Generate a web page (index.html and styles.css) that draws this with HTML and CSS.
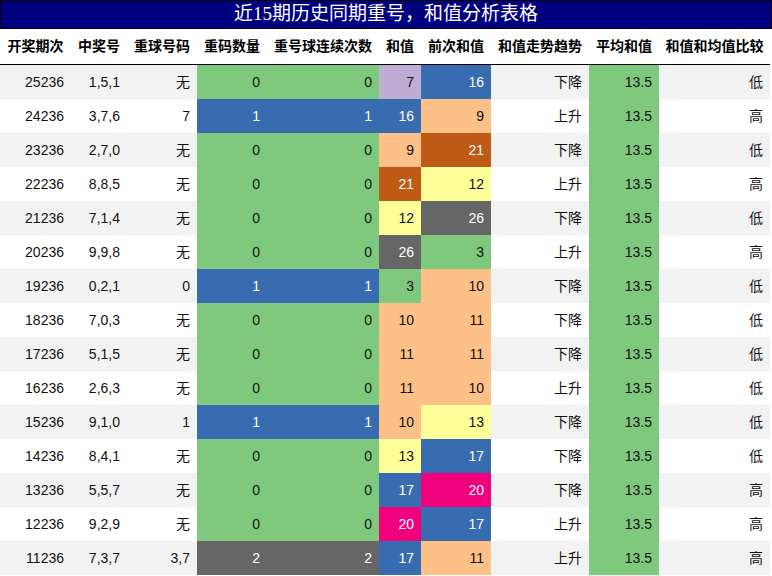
FILE: index.html
```html
<!DOCTYPE html>
<html lang="zh">
<head>
<meta charset="utf-8">
<title>近15期历史同期重号，和值分析表格</title>
<link rel="stylesheet" href="styles.css">
</head>
<body>
<div class="title">近15期历史同期重号，和值分析表格</div>
<div class="table">
  <div class="row head">
    <div>开奖期次</div><div>中奖号</div><div>重球号码</div><div>重码数量</div><div>重号球连续次数</div><div>和值</div><div>前次和值</div><div>和值走势趋势</div><div>平均和值</div><div>和值和均值比较</div>
  </div>
  <div class="row alt"><div>25236</div><div>1,5,1</div><div>无</div><div class="c-green">0</div><div class="c-green">0</div><div class="c-lav">7</div><div class="c-blue">16</div><div>下降</div><div class="c-green">13.5</div><div>低</div></div>
  <div class="row"><div>24236</div><div>3,7,6</div><div>7</div><div class="c-blue">1</div><div class="c-blue">1</div><div class="c-blue">16</div><div class="c-orange">9</div><div>上升</div><div class="c-green">13.5</div><div>高</div></div>
  <div class="row alt"><div>23236</div><div>2,7,0</div><div>无</div><div class="c-green">0</div><div class="c-green">0</div><div class="c-orange">9</div><div class="c-brown">21</div><div>下降</div><div class="c-green">13.5</div><div>低</div></div>
  <div class="row"><div>22236</div><div>8,8,5</div><div>无</div><div class="c-green">0</div><div class="c-green">0</div><div class="c-brown">21</div><div class="c-yellow">12</div><div>上升</div><div class="c-green">13.5</div><div>高</div></div>
  <div class="row alt"><div>21236</div><div>7,1,4</div><div>无</div><div class="c-green">0</div><div class="c-green">0</div><div class="c-yellow">12</div><div class="c-grey">26</div><div>下降</div><div class="c-green">13.5</div><div>低</div></div>
  <div class="row"><div>20236</div><div>9,9,8</div><div>无</div><div class="c-green">0</div><div class="c-green">0</div><div class="c-grey">26</div><div class="c-green">3</div><div>上升</div><div class="c-green">13.5</div><div>高</div></div>
  <div class="row alt"><div>19236</div><div>0,2,1</div><div>0</div><div class="c-blue">1</div><div class="c-blue">1</div><div class="c-green">3</div><div class="c-orange">10</div><div>下降</div><div class="c-green">13.5</div><div>低</div></div>
  <div class="row"><div>18236</div><div>7,0,3</div><div>无</div><div class="c-green">0</div><div class="c-green">0</div><div class="c-orange">10</div><div class="c-orange">11</div><div>下降</div><div class="c-green">13.5</div><div>低</div></div>
  <div class="row alt"><div>17236</div><div>5,1,5</div><div>无</div><div class="c-green">0</div><div class="c-green">0</div><div class="c-orange">11</div><div class="c-orange">11</div><div>下降</div><div class="c-green">13.5</div><div>低</div></div>
  <div class="row"><div>16236</div><div>2,6,3</div><div>无</div><div class="c-green">0</div><div class="c-green">0</div><div class="c-orange">11</div><div class="c-orange">10</div><div>上升</div><div class="c-green">13.5</div><div>低</div></div>
  <div class="row alt"><div>15236</div><div>9,1,0</div><div>1</div><div class="c-blue">1</div><div class="c-blue">1</div><div class="c-orange">10</div><div class="c-yellow">13</div><div>下降</div><div class="c-green">13.5</div><div>低</div></div>
  <div class="row"><div>14236</div><div>8,4,1</div><div>无</div><div class="c-green">0</div><div class="c-green">0</div><div class="c-yellow">13</div><div class="c-blue">17</div><div>下降</div><div class="c-green">13.5</div><div>低</div></div>
  <div class="row alt"><div>13236</div><div>5,5,7</div><div>无</div><div class="c-green">0</div><div class="c-green">0</div><div class="c-blue">17</div><div class="c-pink">20</div><div>下降</div><div class="c-green">13.5</div><div>高</div></div>
  <div class="row"><div>12236</div><div>9,2,9</div><div>无</div><div class="c-green">0</div><div class="c-green">0</div><div class="c-pink">20</div><div class="c-blue">17</div><div>上升</div><div class="c-green">13.5</div><div>高</div></div>
  <div class="row alt"><div>11236</div><div>7,3,7</div><div>3,7</div><div class="c-grey">2</div><div class="c-grey">2</div><div class="c-blue">17</div><div class="c-orange">11</div><div>上升</div><div class="c-green">13.5</div><div>高</div></div>
</div>
</body>
</html>
```

FILE: styles.css
```css
html, body {
  margin: 0;
  padding: 0;
  background: #ffffff;
}
body {
  font-family: "Liberation Sans", "Noto Sans CJK SC", sans-serif;
  color: #111111;
  width: 772px;
}
.title {
  box-sizing: border-box;
  width: 772px;
  height: 29px;
  border: 1px solid #000000;
  background: #000080;
  color: #ffffff;
  text-align: center;
  font-family: "Liberation Serif", "Noto Sans CJK SC", serif;
  font-size: 19px;
  line-height: 26px;
}
.table {
  width: 770px;
}
.row {
  display: grid;
  grid-template-columns: 71px 56px 70px 70px 112px 42px 70px 98px 70px 111px;
  height: 34px;
  background: #ffffff;
}
.row.alt {
  background: #f2f2f2;
}
.row > div {
  font-size: 14px;
  line-height: 34px;
  text-align: right;
  padding-right: 7px;
  white-space: nowrap;
}
.row.head {
  height: 35px;
  border-bottom: 1px solid #000000;
  background: #ffffff;
}
.row.head > div {
  font-weight: bold;
  text-align: center;
  padding: 0;
  line-height: 35px;
  color: #000000;
}
.c-green { background: #7fc97f; }
.c-lav { background: #beaed4; }
.c-orange { background: #fdc086; }
.c-yellow { background: #ffff99; }
.c-blue { background: #386cb0; color: #ffffff; }
.c-pink { background: #f0027f; color: #ffffff; }
.c-brown { background: #bf5b17; color: #ffffff; }
.c-grey { background: #666666; color: #ffffff; }
```
